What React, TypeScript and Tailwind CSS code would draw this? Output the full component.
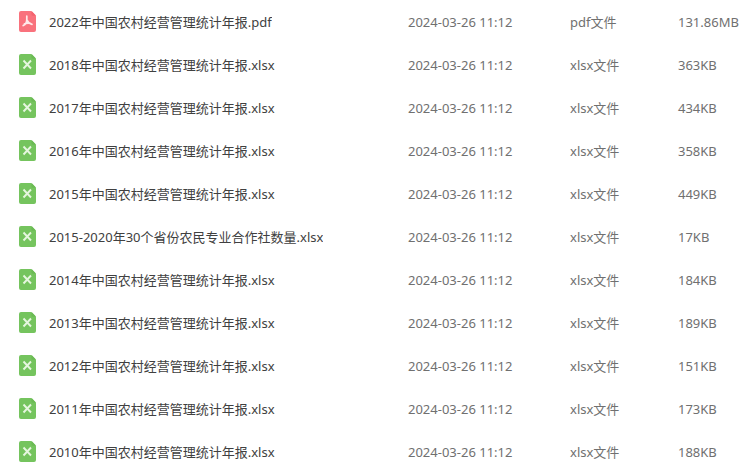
type FileKind = "pdf" | "xlsx";

interface FileEntry {
  name: string;
  modified: string;
  kind: FileKind;
  size: string;
}

const modified = "2024-03-26 11:12";

const files: FileEntry[] = [
  { name: "2022年中国农村经营管理统计年报.pdf", modified, kind: "pdf", size: "131.86MB" },
  { name: "2018年中国农村经营管理统计年报.xlsx", modified, kind: "xlsx", size: "363KB" },
  { name: "2017年中国农村经营管理统计年报.xlsx", modified, kind: "xlsx", size: "434KB" },
  { name: "2016年中国农村经营管理统计年报.xlsx", modified, kind: "xlsx", size: "358KB" },
  { name: "2015年中国农村经营管理统计年报.xlsx", modified, kind: "xlsx", size: "449KB" },
  { name: "2015-2020年30个省份农民专业合作社数量.xlsx", modified, kind: "xlsx", size: "17KB" },
  { name: "2014年中国农村经营管理统计年报.xlsx", modified, kind: "xlsx", size: "184KB" },
  { name: "2013年中国农村经营管理统计年报.xlsx", modified, kind: "xlsx", size: "189KB" },
  { name: "2012年中国农村经营管理统计年报.xlsx", modified, kind: "xlsx", size: "151KB" },
  { name: "2011年中国农村经营管理统计年报.xlsx", modified, kind: "xlsx", size: "173KB" },
  { name: "2010年中国农村经营管理统计年报.xlsx", modified, kind: "xlsx", size: "188KB" },
];

function FileIcon({ kind }: { kind: FileKind }) {
  const pdf = kind === "pdf";
  return (
    <svg viewBox="0 0 17 21" className="h-[21px] w-[17px] shrink-0" aria-hidden="true">
      <path
        d="M2 0H11.6Q12.4 0 13 .6L16.4 4Q17 4.6 17 5.4V19A2 2 0 0 1 15 21H2A2 2 0 0 1 0 19V2A2 2 0 0 1 2 0Z"
        fill={pdf ? "#f9727d" : "#75c45e"}
      />
      <path
        d="M12.4 .3Q12.7 .3 13 .6L16.4 4Q16.8 4.4 16.9 4.8H14A1.6 1.6 0 0 1 12.4 3.2Z"
        fill={pdf ? "#f4636f" : "#6bba54"}
      />
      {pdf ? (
        <path
          d="M7.8 5.2V8.4C7.8 10.6 6.6 13.4 4.2 14.6M8 9.2C9 11.4 10.6 12.9 13 13.3M5.4 13.1C7.2 12 9.4 11.8 11.4 12.4"
          fill="none"
          stroke="#ffe9ea"
          strokeWidth="1.7"
          strokeLinecap="round"
        />
      ) : (
        <path d="M4.5 6.5L12 14.5M12 6.5L4.5 14.5" fill="none" stroke="#e6f6df" strokeWidth="1.9" />
      )}
    </svg>
  );
}

export default function App() {
  return (
    <main className="min-h-screen bg-white font-['Noto_Sans','Noto_Sans_CJK_SC',sans-serif] text-[13px] leading-5 text-[#707070]">
      <table aria-label="文件列表" className="w-full table-fixed border-collapse">
        <colgroup>
          <col />
          <col className="w-[162px]" />
          <col className="w-[108px]" />
          <col className="w-[73px]" />
        </colgroup>
        <tbody>
          {files.map((file) => (
            <tr key={file.name} className="h-[43px] whitespace-nowrap">
              <td className="p-0 pl-[19px]">
                <div className="flex items-center gap-[13px]">
                  <FileIcon kind={file.kind} />
                  <span className="truncate text-[#404040]">{file.name}</span>
                </div>
              </td>
              <td className="p-0">{file.modified}</td>
              <td className="p-0">{file.kind}文件</td>
              <td className="p-0">{file.size}</td>
            </tr>
          ))}
        </tbody>
      </table>
    </main>
  );
}
